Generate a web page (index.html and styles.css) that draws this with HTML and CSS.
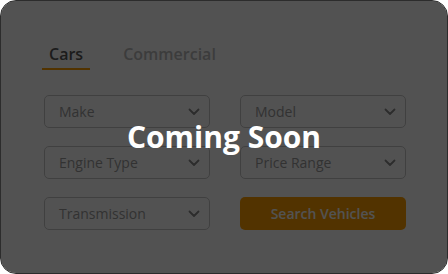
FILE: index.html
```html
<!DOCTYPE html>
<html lang="en">
<head>
<meta charset="utf-8">
<title>Vehicle Search</title>
<link rel="stylesheet" href="styles.css">
</head>
<body>
<div class="card">
  <div class="tabs">
    <div class="tab active">Cars</div>
    <div class="tab">Commercial</div>
  </div>
  <div class="form">
    <div class="select"><span>Make</span><svg class="chev" width="12" height="8" viewBox="0 0 12 8"><polyline points="1.5,1.5 6,6 10.5,1.5"/></svg></div>
    <div class="select"><span>Model</span><svg class="chev" width="12" height="8" viewBox="0 0 12 8"><polyline points="1.5,1.5 6,6 10.5,1.5"/></svg></div>
    <div class="select"><span>Engine Type</span><svg class="chev" width="12" height="8" viewBox="0 0 12 8"><polyline points="1.5,1.5 6,6 10.5,1.5"/></svg></div>
    <div class="select"><span>Price Range</span><svg class="chev" width="12" height="8" viewBox="0 0 12 8"><polyline points="1.5,1.5 6,6 10.5,1.5"/></svg></div>
    <div class="select"><span>Transmission</span><svg class="chev" width="12" height="8" viewBox="0 0 12 8"><polyline points="1.5,1.5 6,6 10.5,1.5"/></svg></div>
    <button class="search">Search Vehicles</button>
  </div>
  <div class="overlay"><span class="soon">Coming Soon</span></div>
</div>
</body>
</html>
```
FILE: styles.css
```css
* { box-sizing: border-box; }
html, body {
  margin: 0;
  padding: 0;
  background: #ffffff;
}
body {
  font-family: "Open Sans", "Liberation Sans", sans-serif;
}
.card {
  position: relative;
  width: 448px;
  height: 274px;
  border: 1px solid #2c2c2c;
  border-radius: 16px;
  background: #ffffff;
  padding: 41px 41px 0 41px;
}
.tabs {
  display: flex;
  gap: 26px;
}
.tab {
  font-size: 16px;
  font-weight: 600;
  line-height: 24px;
  padding: 0 7px 2px;
  border-bottom: 2px solid transparent;
  color: #bbbbbb;
}
.tab.active {
  color: #575757;
  border-bottom-color: #ff9f00;
}
.form {
  margin-top: 25px;
  padding-left: 2px;
  display: grid;
  grid-template-columns: 166px 166px;
  grid-auto-rows: 33px;
  column-gap: 30px;
  row-gap: 18px;
}
.select {
  display: flex;
  align-items: center;
  justify-content: space-between;
  border: 1px solid #c8c8c8;
  border-radius: 5px;
  padding: 0 9px 0 14px;
  font-size: 14px;
  color: #9c9c9c;
  background: #ffffff;
}
.chev polyline {
  fill: none;
  stroke: #888888;
  stroke-width: 1.8;
  stroke-linecap: round;
  stroke-linejoin: round;
}
.search {
  border: none;
  border-radius: 5px;
  background: #ff9f00;
  color: #ffffff;
  font-family: "Open Sans", "Liberation Sans", sans-serif;
  font-size: 14px;
  font-weight: 600;
  padding: 0;
}
.overlay {
  position: absolute;
  inset: 0;
  border-radius: 15px;
  background: rgba(0, 0, 0, 0.68);
  display: flex;
  align-items: center;
  justify-content: center;
}
.soon {
  color: #ffffff;
  font-size: 30px;
  font-weight: 700;
  line-height: 1;
}
```
